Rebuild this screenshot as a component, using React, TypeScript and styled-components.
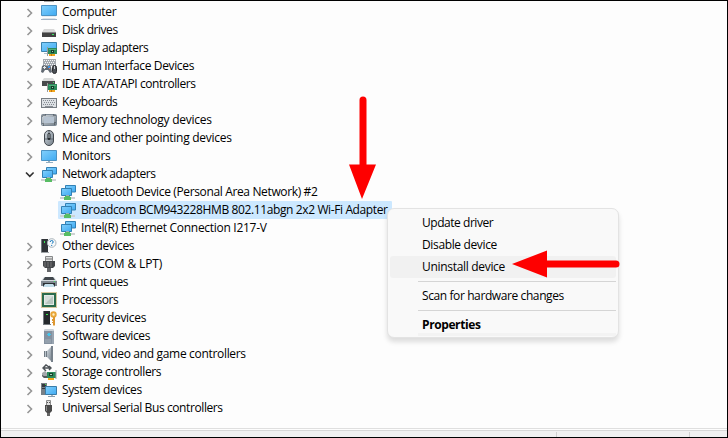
import type { ReactNode } from "react";
import styled, { createGlobalStyle } from "styled-components";

const GlobalStyle = createGlobalStyle`
  * {
    box-sizing: border-box;
  }

  body {
    margin: 0;
    overflow: hidden;
    font-family: "Open Sans", "Noto Sans", sans-serif;
    font-size: 12px;
    color: #000;
  }
`;

const Window = styled.main`
  position: relative;
  display: flex;
  flex-direction: column;
  width: 728px;
  height: 438px;
  border: 1px solid #000;
  background: #fdfdfd;
  overflow: hidden;
`;

const RootIconEdge = styled.div`
  height: 2px;
  padding-left: 43px;

  &::before {
    content: "";
    display: block;
    width: 10px;
    height: 1px;
    background: #a5a5a5;
  }
`;

const Tree = styled.ul`
  flex: 1;
  margin: 0;
  padding: 0;
  list-style: none;
`;

const TreeRow = styled.li<{ $child?: boolean }>`
  display: flex;
  align-items: center;
  height: 18px;
  padding-left: ${({ $child }) => ($child ? "57px" : "22px")};
`;

const Expander = styled.span`
  width: 13px;
  height: 16px;
  margin-right: 5px;
`;

const RowBody = styled.span<{ $selected?: boolean; $child?: boolean }>`
  display: flex;
  align-items: center;
  height: 18px;
  padding-left: ${({ $child }) => ($child ? "2px" : "0")};
  padding-right: 4px;
  border-radius: 1px;
  background: ${({ $selected }) => ($selected ? "#cce8ff" : "transparent")};
`;

const Icon = styled.svg`
  display: block;
  flex: none;
  width: 16px;
  height: 16px;
`;

const Label = styled.span<{ $width: number; $spacing: number }>`
  width: ${({ $width }) => $width}px;
  margin-left: 5px;
  line-height: 18px;
  white-space: nowrap;
  letter-spacing: ${({ $spacing }) => $spacing}px;
`;

const StatusBar = styled.footer`
  display: flex;
  height: 9px;
  border-top: 1px solid #dfdfdf;
  background: #f0f0f0;
  box-shadow: inset 0 1px #fdfdfd, inset 0 2px #d7d7d7;
  padding-top: 3px;
`;

const StatusCell = styled.div<{ $width: number }>`
  width: ${({ $width }) => $width}px;
  border-right: 1px solid #d0d0d0;
`;

const ContextMenu = styled.div`
  position: absolute;
  left: 386px;
  top: 207px;
  width: 232px;
  height: 130px;
  padding: 3px 2px;
  border: 1px solid #e3e3e3;
  border-radius: 7px;
  background: #f9f9f9;
  box-shadow: 0 4px 5px rgba(0, 0, 0, 0.13);
`;

const MenuItem = styled.div<{ $hover?: boolean; $bold?: boolean; $spacing: number }>`
  height: 22px;
  padding-left: 32px;
  border-radius: 3px;
  line-height: 22px;
  white-space: nowrap;
  font-weight: ${({ $bold }) => ($bold ? 700 : 400)};
  letter-spacing: ${({ $spacing }) => $spacing}px;
  background: ${({ $hover }) => ($hover ? "#f1f1f1" : "transparent")};
`;

const Separator = styled.hr`
  height: 1px;
  margin: 3px 0 3px 28px;
  border: 0;
  background: #d5d5d5;
`;

const MenuFoot = styled.div`
  height: 3px;
  margin: -3px 0 0 28px;
  background: #f3f3f3;
`;

const Arrows = styled.svg`
  position: absolute;
  left: -1px;
  top: -1px;
  width: 728px;
  height: 438px;
  pointer-events: none;
`;

const Gradients = styled.svg`
  position: absolute;
  width: 0;
  height: 0;
`;

const boardGreen = "#2c8a5b";

const Board = () => (
  <>
    <path d="M7 8h9v6H7z" fill={boardGreen} />
    <path d="M6 7h1v9H6z" fill="#9b9b9b" />
    <path d="M8 9h7v1H8z" fill="#4fb07c" />
    <path d="M10 10h3v3h-3z" fill="#143d2b" />
    <path d="M11 11h1v1h-1z" fill="#8edbab" />
    <path d="M8 14h6v2H8z" fill="#f2a51c" />
    <path d="M10 14h1v2h-1z" fill="#bd7610" />
  </>
);

const icons: Record<string, ReactNode> = {
  computer: (
    <>
      <path d="M.5 1.500h15v10H.5z" fill="url(#screen)" stroke="#4c93c4" />
      <path d="M1 12h14v1H1z" fill="#e7edf2" />
      <path d="M2 14h12l2 2H0z" fill="#dde4ea" />
      <path d="M0 15h16v1H0z" fill="#a3b4c6" />
    </>
  ),
  disk: (
    <>
      <path d="M3 7h10l2 3H1z" fill="#d8d8d8" />
      <path d="M1 10h14v5H1z" fill="#424242" />
      <path d="M1 10h14v1H1z" fill="#858585" />
      <path d="M11 12h2v1h-2z" fill="#36e65e" />
    </>
  ),
  display: (
    <>
      <path d="M.5 2.500h15v9H.5z" fill="url(#screen)" stroke="#3b82ad" />
      <path d="M3 13h4v1H3z" fill="#b1c1cd" />
      <Board />
    </>
  ),
  human: (
    <>
      <path d="M2 1h13v7H2z" fill="#a5aab0" />
      <path d="M3 2.500h11M4 4.500h10M3 6.500h11" stroke="#f4f5f6" strokeDasharray="1 1" />
      <path d="M1 8l2-1 2 1h2l2-1 1 2 1 5-2 1-2-3H4l-2 3-2-1z" fill="#626a73" />
      <path d="M3 8h1v3H3zM2 9h3v1H2z" fill="#e4e8eb" />
      <path d="M7 8h2v2H7z" fill="#4293e1" />
      <path d="M8 10h1v1H8z" fill="#e87961" />
      <rect x="11.500" y="7.500" width="4" height="8" rx="2" fill="#4a4f55" stroke="#28292c" />
      <path d="M13 8h1v3h-1z" fill="#c9cfd3" />
    </>
  ),
  ide: (
    <>
      <path d="M3 2h9l2 3H1z" fill="#d7d9d9" />
      <path d="M1 5h13v5H1z" fill="#484a4c" />
      <path d="M12 6h1v1h-1z" fill="#43da67" />
      <Board />
    </>
  ),
  keyboard: (
    <>
      <path d="M0 4h16v10H0z" fill="#777d83" />
      <path d="M1 5h14v8H1z" fill="#dce0e4" />
      <path d="M2 6.500h12M2 10.500h12" stroke="#858b92" strokeDasharray="1 1" />
      <path d="M3 8.500h11" stroke="#858b92" strokeDasharray="1 1" />
      <path d="M4 12h8v1H4z" fill="#8a8f95" />
    </>
  ),
  memory: (
    <>
      <rect x=".5" y="2.500" width="15" height="11" rx="1" fill="url(#metal)" stroke="#7b8793" />
      <path d="M1 4h2V3h2M12 3h2v2M2 11v2h2M14 10v2h-2" fill="none" stroke="#3d444a" strokeDasharray="1 1" />
      <path d="M3 5h10v6H3z" fill="#b6c3d1" />
    </>
  ),
  mouse: (
    <>
      <rect x="3.500" y=".5" width="9" height="15" rx="4.500" fill="url(#metal)" stroke="#43484e" />
      <path d="M8 1v8M4 9h8" stroke="#656d76" />
      <rect x="6.500" y="3" width="3" height="7" rx="1.500" fill="#252a2f" />
      <path d="M8 4v4" stroke="#bcc4ca" />
    </>
  ),
  monitor: (
    <>
      <path d="M.5 2.500h15v10H.5z" fill="url(#screen)" stroke="#4c93c4" />
      <path d="M7 13h2v1H7z" fill="#9eafbb" />
      <path d="M5 14h7v1H5z" fill="#91aec3" />
    </>
  ),
  network: (
    <>
      <path d="M5.500 1.500h10v6.500h-10z" fill="url(#screen)" stroke="#3381b5" />
      <path d="M1.500 4.500h10v7h-10z" fill="url(#screen)" stroke="#3381b5" />
      <path d="M0 13h15v2H0z" fill="#cfd2d3" />
      <path d="M5 12h5v1h1v3H4v-3h1z" fill="#58bd64" />
      <path d="M6 11h3v1H6z" fill="#9eacb5" />
    </>
  ),
  other: (
    <>
      <path d="M0 1h7v13H0z" fill="#303438" />
      <path d="M0 1h1v13H0z" fill="#757b80" />
      <path d="M3 3h1v2H3z" fill="#37e652" />
      <path d="M0 14h8v1H0z" fill="#9fa4a7" />
      <circle cx="10.700" cy="5" r="4.300" fill="#f7f9fa" stroke="#a9b3ba" />
      <path d="M9.200 4q0-1.500 1.500-1.500T12.200 4q0 1-1.500 1.700M10.700 7v1" fill="none" stroke="#1277bc" />
    </>
  ),
  port: (
    <>
      <path d="M4.500.5h7v5h-7z" fill="#dedfdf" stroke="#87898a" />
      <path d="M6 2v2M8 2v2M10 2v2" stroke="#777" />
      <path d="M2 5h12v5l-2 2H4l-2-2z" fill="#45474a" />
      <path d="M4 6v5M7 6v5M10 6v5" stroke="#777" />
      <path d="M6 12h4v4H6z" fill="#65676a" />
    </>
  ),
  printer: (
    <>
      <path d="M3 3h10l3 4v4H0V7z" fill="#d3dade" />
      <path d="M4 3h8l2 3H2z" fill="#42484d" />
      <path d="M0 7h16v5H0z" fill="#818a92" />
      <path d="M2 9h12v4H2z" fill="#292e31" />
      <path d="M4 10h8l2 3H2z" fill="#c2deeb" />
      <path d="M13 7h1v1h-1z" fill="#3cdc60" />
    </>
  ),
  processor: (
    <>
      <rect x=".5" y=".5" width="15" height="15" fill="none" stroke="#b3933e" strokeDasharray="1 1" />
      <path d="M1 1h14v14H1z" fill="#2c6b4c" />
      <path d="M3 3h10v10H3z" fill="#e3eae6" />
      <path d="M4 4h8v8H4z" fill="#b9c6bf" />
      <path d="M4 12V4h8z" fill="#d6ddd9" />
    </>
  ),
  security: (
    <>
      <path d="M2 1h7v13H2z" fill="#25292c" />
      <path d="M2 1h1v13H2zM2 14h8v1H2z" fill="#767b80" />
      <path d="M5 4h2v1H5z" fill="#36e94c" />
      <circle cx="12.500" cy="4.500" r="2.200" fill="#fff1c9" stroke="#e8a537" strokeWidth="2" />
      <path d="M12 7h2v8l-1 1-1-1v-2h-1v-1h1v-1h-1V9h1z" fill="#dd9730" />
    </>
  ),
  software: (
    <>
      <path d="M4 1h8l1 2v13H3V3z" fill="#99a5b1" />
      <path d="M3 3h8v13H3z" fill="#8491a0" />
      <path d="M4 1h8l1 2H3z" fill="#cad1d7" />
      <path d="M7 5h2v3H7zM6 6h4v1H6z" fill="#44c5ed" />
      <path d="M4 12h6M4 14h6" stroke="#a3afb9" />
    </>
  ),
  sound: (
    <>
      <path d="M3 5h3v6H3z" fill="#707a83" />
      <path d="M6 5l5-5v16l-5-5z" fill="url(#metal)" />
      <path d="M10 0h2v16h-2z" fill="#77818b" />
      <path d="M4 5h1v6H4z" fill="#bac4cc" />
    </>
  ),
  storage: (
    <>
      <path d="M8 3L5 1 2 4l3 3M3 4h6M8 2l2 2-2 2" fill="none" stroke="#4c5156" strokeWidth="1.400" />
      <path d="M1 9l3-2 4 4-2 3H3l-2-2z" fill="#a5a9ac" />
      <path d="M1 11l2 1h4v2H3l-2-2z" fill="#53585b" />
      <path d="M6 8h9v6H6z" fill={boardGreen} />
      <path d="M8 9h4v3H8z" fill="#17432f" />
      <path d="M9 10h2v1H9z" fill="#a6d7ba" />
      <path d="M15 6v9" stroke="#9ea4a9" />
      <path d="M7 14h6v2H7z" fill="#eda51a" />
    </>
  ),
  system: (
    <>
      <path d="M0 1h6v12H0z" fill="#777f86" />
      <path d="M1 2h4v3H1zM1 6h4v1H1z" fill="#343a40" />
      <path d="M4 2h1v1H4z" fill="#47d94d" />
      <path d="M4.500 4.500h11v8h-11z" fill="url(#screen)" stroke="#397ca8" />
      <path d="M7 14h7v1H7z" fill="#879baa" />
      <path d="M10 13h2v1h-2z" fill="#aab8c1" />
    </>
  ),
  usb: (
    <>
      <path d="M5.500.5h4v5h-4z" fill="#dedede" stroke="#8b8b8b" />
      <path d="M6 2h1v1H6zM8 2h1v1H8z" fill="#555" />
      <path d="M4 5h7v6l-2 2H6l-2-2z" fill="#4a4a4a" />
      <path d="M5 6h1v5H5z" fill="#888" />
      <path d="M6 13h3v3H6z" fill="#666" />
    </>
  ),
};

interface Device {
  name: string;
  icon: string;
  width: number;
  spacing: number;
  open?: boolean;
  child?: boolean;
  selected?: boolean;
}

const devices: Device[] = [
  { name: "Computer", icon: "computer", width: 55, spacing: -0.25 },
  { name: "Disk drives", icon: "disk", width: 57, spacing: -0.45 },
  { name: "Display adapters", icon: "display", width: 87, spacing: -0.44 },
  { name: "Human Interface Devices", icon: "human", width: 133, spacing: -0.35 },
  { name: "IDE ATA/ATAPI controllers", icon: "ide", width: 135, spacing: -0.4 },
  { name: "Keyboards", icon: "keyboard", width: 56, spacing: -0.44 },
  { name: "Memory technology devices", icon: "memory", width: 151, spacing: -0.24 },
  { name: "Mice and other pointing devices", icon: "mouse", width: 171, spacing: -0.27 },
  { name: "Monitors", icon: "monitor", width: 49, spacing: -0.25 },
  { name: "Network adapters", icon: "network", width: 94, spacing: -0.44, open: true },
  { name: "Bluetooth Device (Personal Area Network) #2", icon: "network", width: 238, spacing: -0.36, child: true },
  { name: "Broadcom BCM943228HMB 802.11abgn 2x2 Wi-Fi Adapter", icon: "network", width: 307, spacing: -0.38, child: true, selected: true },
  { name: "Intel(R) Ethernet Connection I217-V", icon: "network", width: 187, spacing: -0.29, child: true },
  { name: "Other devices", icon: "other", width: 73, spacing: -0.38 },
  { name: "Ports (COM & LPT)", icon: "port", width: 101, spacing: -0.12 },
  { name: "Print queues", icon: "printer", width: 67, spacing: -0.42 },
  { name: "Processors", icon: "processor", width: 57, spacing: -0.5 },
  { name: "Security devices", icon: "security", width: 85, spacing: -0.31 },
  { name: "Software devices", icon: "software", width: 89, spacing: -0.38 },
  { name: "Sound, video and game controllers", icon: "sound", width: 185, spacing: -0.32 },
  { name: "Storage controllers", icon: "storage", width: 100, spacing: -0.37 },
  { name: "System devices", icon: "system", width: 80, spacing: -0.36 },
  { name: "Universal Serial Bus controllers", icon: "usb", width: 161, spacing: -0.4 },
];

const Chevron = ({ open }: { open?: boolean }) => (
  <Expander>
    <svg width="13" height="16" fill="none">
      <path
        d={open ? "M3 6.500l3.800 3.800 3.800-3.800" : "M4.500 5l4 4-4 4"}
        stroke={open ? "#303030" : "#969696"}
        strokeWidth="1.600"
      />
    </svg>
  </Expander>
);

export default function App() {
  return (
    <>
      <GlobalStyle />
      <Window>
        <Gradients>
          <defs>
            <linearGradient id="screen" x2="1" y2="1">
              <stop stopColor="#82d0fc" />
              <stop offset="1" stopColor="#3faaf2" />
            </linearGradient>
            <linearGradient id="metal" x2="1" y2="1">
              <stop stopColor="#d2dae1" />
              <stop offset="1" stopColor="#737e88" />
            </linearGradient>
          </defs>
        </Gradients>
        <RootIconEdge />
        <Tree>
          {devices.map((device) => (
            <TreeRow key={device.name} $child={device.child}>
              {!device.child && <Chevron open={device.open} />}
              <RowBody $child={device.child} $selected={device.selected}>
                <Icon viewBox="0 0 16 16">{icons[device.icon]}</Icon>
                <Label $width={device.width} $spacing={device.spacing}>{device.name}</Label>
              </RowBody>
            </TreeRow>
          ))}
        </Tree>
        <StatusBar>
          <StatusCell $width={556} />
          <StatusCell $width={133} />
        </StatusBar>
        <ContextMenu>
          <MenuItem $spacing={-0.46}>Update driver</MenuItem>
          <MenuItem $spacing={-0.36}>Disable device</MenuItem>
          <MenuItem $hover $spacing={-0.31}>Uninstall device</MenuItem>
          <Separator />
          <MenuItem $spacing={-0.4}>Scan for hardware changes</MenuItem>
          <Separator />
          <MenuItem $bold $spacing={-0.4}>Properties</MenuItem>
          <MenuFoot />
        </ContextMenu>
        <Arrows viewBox="0 0 728 438">
          <g fill="#fe0000" stroke="#fe0000">
            <path d="M363 100v66M616 264h-71" strokeWidth="7" strokeLinecap="round" />
            <path d="M349 164.500h27L362 199zM547 250.500v27L512 264z" stroke="none" />
          </g>
        </Arrows>
      </Window>
    </>
  );
}
